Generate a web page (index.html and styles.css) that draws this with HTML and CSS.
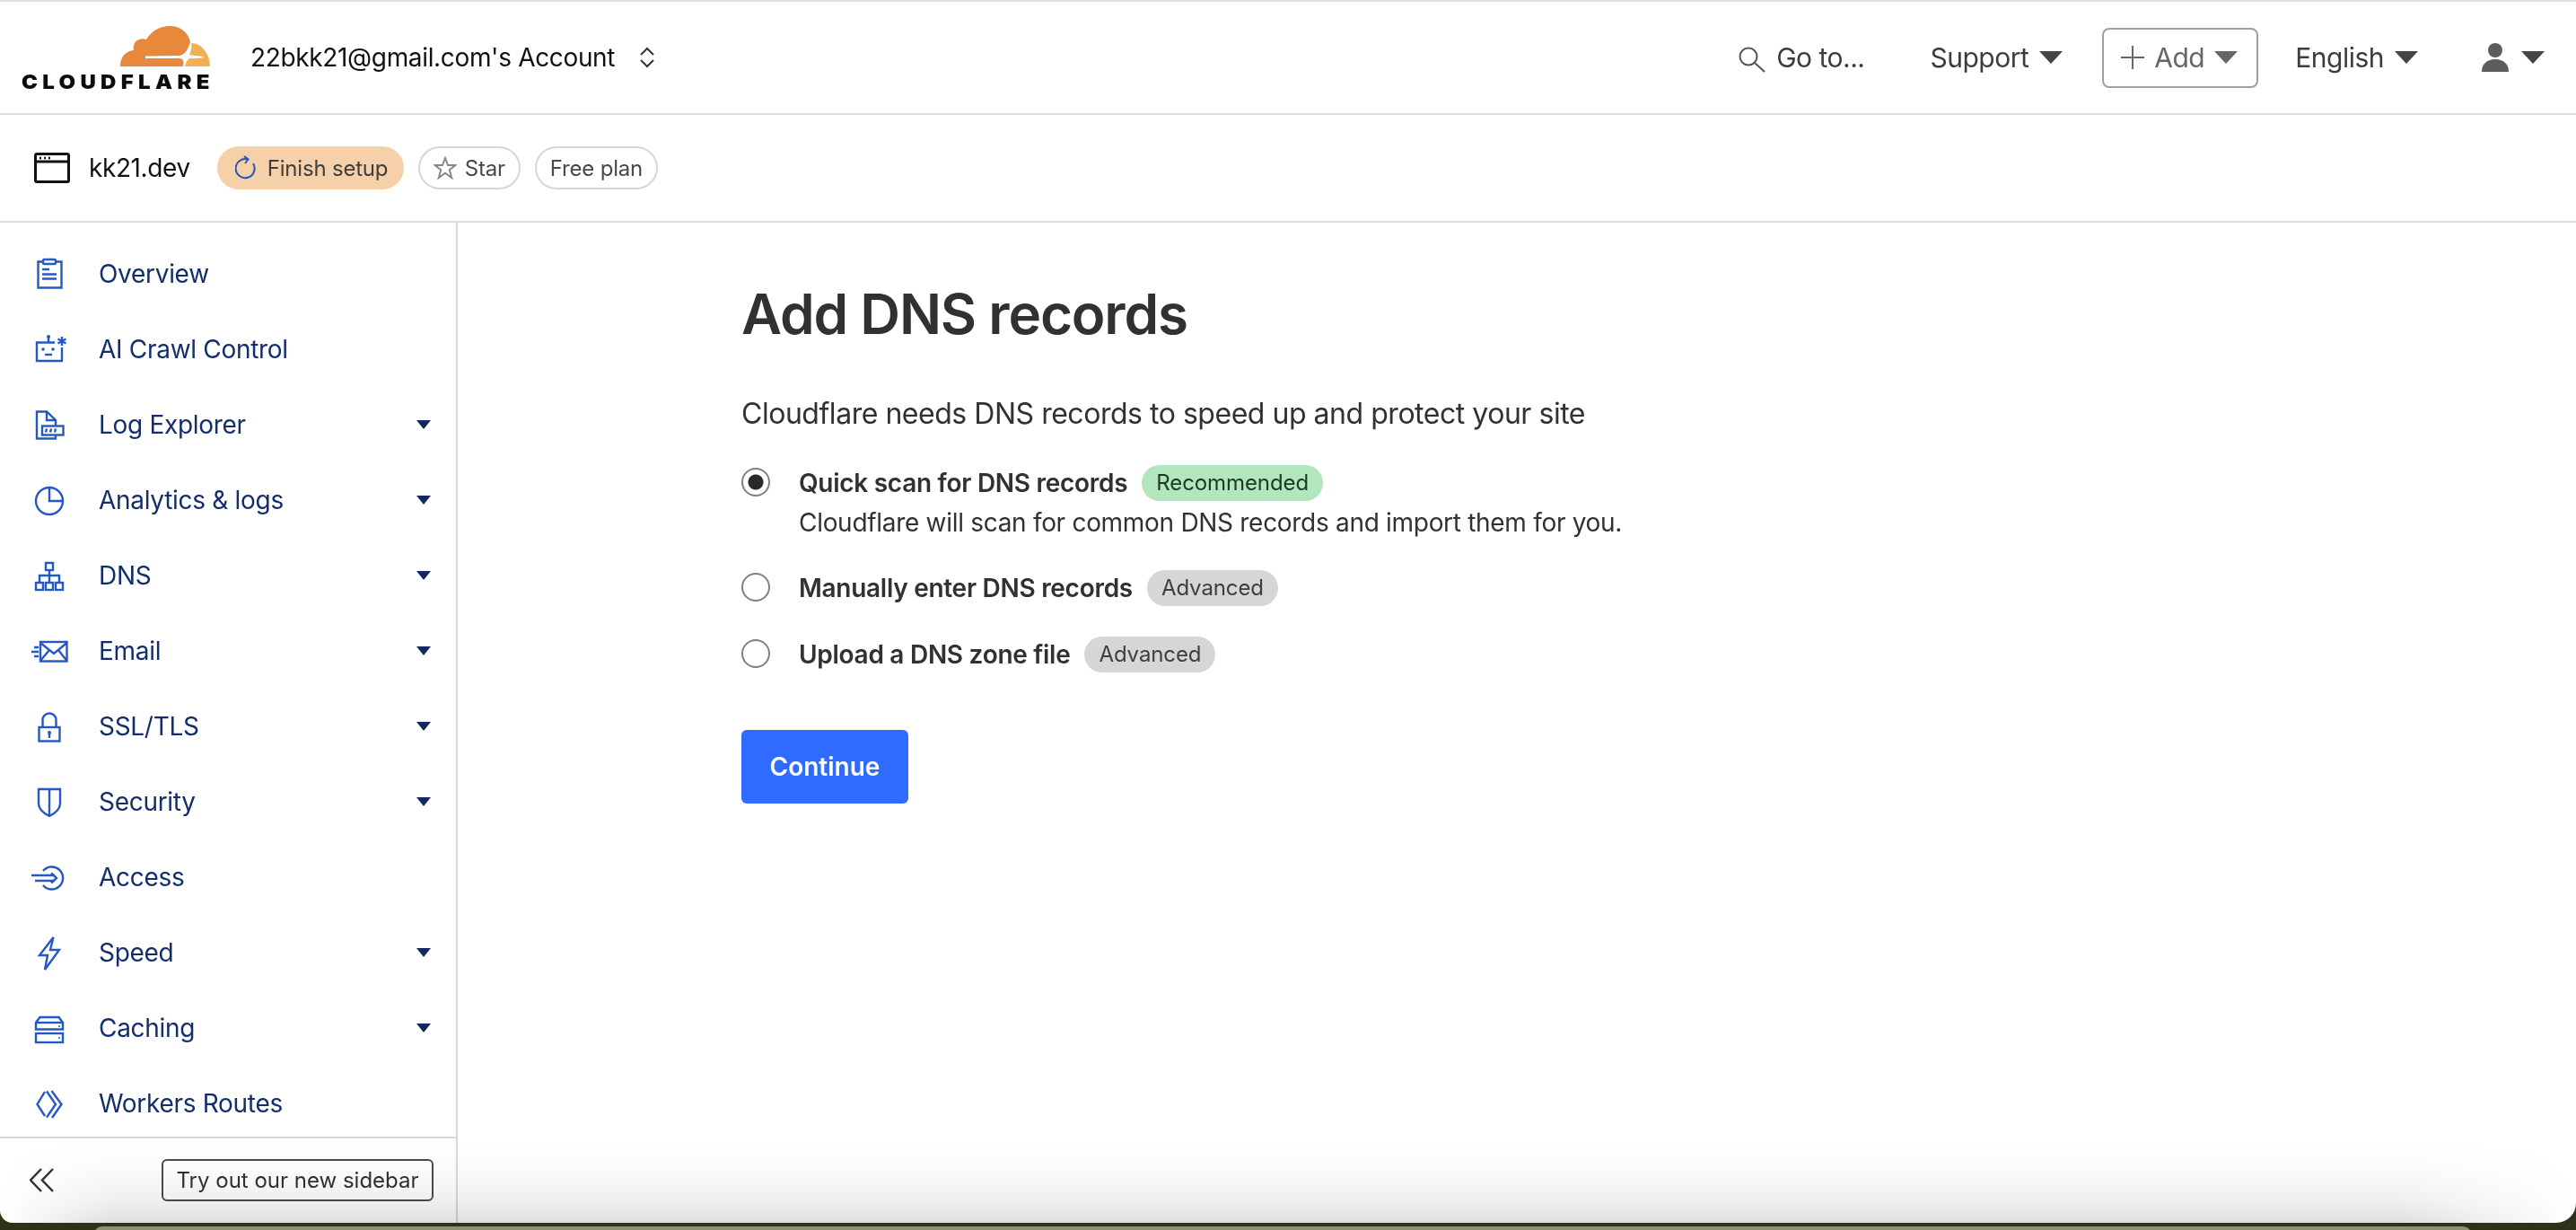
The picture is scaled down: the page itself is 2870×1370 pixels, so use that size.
FILE: index.html
```html
<!DOCTYPE html>
<html lang="en">
<head>
<meta charset="utf-8">
<title>Add DNS records</title>
<link rel="stylesheet" href="styles.css">
</head>
<body>
<div class="backdrop-bar"></div>
<div class="window">
  <header class="topbar">
    <a class="logo">
      <svg class="cloud" viewBox="0 0 100 45">
        <path fill="#e8883a" d="M0 45C0 34 6 28 15 27C13 18 21 12 29 15C35 5 45 0 55 0C67 0 76 7 78 18C76 24 73 32 66 33L28 33.5V36H66C71 36 71 41 70 45Z"/>
        <path fill="#f0b058" d="M79 19C90 19 100 30 100 45H72C73 41 74 38 77 36C84 36 93 36 93 34.5C88 33 80 33 77 32C79 28 80 23 79 19Z"/>
      </svg>
      <span class="wordmark">CLOUDFLARE</span>
    </a>
    <div class="account">
      <span>22bkk21@gmail.com's Account</span>
      <svg class="updown" viewBox="0 0 18 24"><path d="M2 9L9 2L16 9M2 15L9 22L16 15"/></svg>
    </div>
    <nav class="topnav">
      <div class="tn goto">
        <svg class="search" viewBox="0 0 32 28"><circle cx="12" cy="11" r="9.5"/><path d="M19 18L30 28"/></svg>
        <span>Go to...</span>
      </div>
      <div class="tn support"><span>Support</span><i class="caret"></i></div>
      <div class="tn add">
        <svg class="plus" viewBox="0 0 26 26"><path d="M13 0V26M0 13H26"/></svg>
        <span>Add</span><i class="caret caret-soft"></i>
      </div>
      <div class="tn lang"><span>English</span><i class="caret"></i></div>
      <div class="tn user">
        <svg class="usericon" viewBox="0 0 32 32"><circle cx="16" cy="8" r="8"/><path d="M1 32C1 23 7 18 16 18S31 23 31 32Z"/></svg>
        <i class="caret"></i>
      </div>
    </nav>
  </header>

  <div class="subbar">
    <svg class="siteicon" viewBox="0 0 40 34"><rect x="1.5" y="1.5" width="37" height="31" rx="1.5"/><path d="M1.5 10H38.5"/><path class="dots" d="M6 6H8M11 6H13M16 6H18"/></svg>
    <span class="sitename">kk21.dev</span>
    <span class="pill pill-setup">
      <svg class="refresh" viewBox="0 0 24 28"><path d="M14 4.500A10.500 10.500 0 1 0 20 9"/><path d="M10 1L14.500 4.500L11 9"/></svg>
      Finish setup
    </span>
    <span class="pill pill-line">
      <svg class="star" viewBox="0 0 26 26"><path d="M13 2L16 10H24.500L17.800 15.200L20.200 24L13 18.800L5.800 24L8.200 15.200L1.500 10H10Z"/></svg>
      Star
    </span>
    <span class="pill pill-line">Free plan</span>
  </div>

  <div class="body">
    <aside class="sidebar">
      <ul class="menu">
        <li class="mi">
          <svg class="ic" viewBox="0 0 48 40"><path d="M17 6.500H11.500V35.500H37.500V6.500H31"/><rect x="17" y="4" width="14" height="5" rx="1.500"/><path d="M16 15H24M16 20.500H32M16 25.500H32"/></svg>
          <span class="ml">Overview</span>
        </li>
        <li class="mi">
          <svg class="ic" viewBox="0 0 48 40"><path d="M30 12.500H10V33H38V18"/><path d="M23 6V12"/><circle class="solid" cx="23" cy="6" r="2"/><circle class="solid" cx="17" cy="20" r="1.800"/><circle class="solid" cx="28" cy="20" r="1.800"/><path d="M19 26H27"/><path d="M38 6V16M33.500 8.500L42.500 13.500M42.500 8.500L33.500 13.500"/></svg>
          <span class="ml">AI Crawl Control</span>
        </li>
        <li class="mi">
          <svg class="ic" viewBox="0 0 48 40"><path d="M31 21V15L21 5.500H10V35.500H31V32"/><path d="M21 5.500V15H31"/><rect x="16" y="21.500" width="23.500" height="10"/><path d="M21 24.500L20 28.500M26 24.500L25 28.500M31 24.500L30 28.500"/></svg>
          <span class="ml">Log Explorer</span><i class="mc"></i>
        </li>
        <li class="mi">
          <svg class="ic" viewBox="0 0 48 40"><path d="M24 6A15 15 0 1 0 39 21A15 15 0 0 0 24 6V21H39"/></svg>
          <span class="ml">Analytics &amp; logs</span><i class="mc"></i>
        </li>
        <li class="mi">
          <svg class="ic" viewBox="0 0 48 40"><rect x="20" y="6" width="8" height="8"/><path d="M24 14V28M13 28V20H35V28"/><rect x="9" y="28" width="8" height="8"/><rect x="20" y="28" width="8" height="8"/><rect x="31" y="28" width="8" height="8"/></svg>
          <span class="ml">DNS</span><i class="mc"></i>
        </li>
        <li class="mi">
          <svg class="ic" viewBox="0 0 48 40"><rect x="14" y="10" width="29.500" height="21.500"/><path d="M14 11L29 23L43.500 11M14 31L24 19M43.500 31L34 19"/><path d="M7 16H12M4 21H12M7 26H12"/></svg>
          <span class="ml">Email</span><i class="mc"></i>
        </li>
        <li class="mi">
          <svg class="ic" viewBox="0 0 48 40"><rect x="12.500" y="21" width="23" height="15.500"/><path d="M16.500 21V13A7.500 7.500 0 0 1 31.500 13V21"/><circle class="solid" cx="24" cy="27" r="2"/><path d="M24 28V33"/></svg>
          <span class="ml">SSL/TLS</span><i class="mc"></i>
        </li>
        <li class="mi">
          <svg class="ic" viewBox="0 0 48 40"><path d="M12 6H36V22C36 29 30 33 24 36C18 33 12 29 12 22Z"/><path d="M24 6V35"/></svg>
          <span class="ml">Security</span><i class="mc"></i>
        </li>
        <li class="mi">
          <svg class="ic" viewBox="0 0 48 40"><path d="M17 13A12.500 12.500 0 1 1 17 29"/><path d="M4 18H30M8 24H30M26 15.500L32 21L26 26.500"/></svg>
          <span class="ml">Access</span>
        </li>
        <li class="mi">
          <svg class="ic" viewBox="0 0 48 40"><path d="M28.500 3L13 23H22L19 39L35 17H25Z"/></svg>
          <span class="ml">Speed</span><i class="mc"></i>
        </li>
        <li class="mi">
          <svg class="ic" viewBox="0 0 48 40"><path d="M9 21.500V14L13.500 8H34.500L39 14V21.500Z"/><path d="M9 14H39"/><rect x="9" y="26" width="30" height="10"/><circle class="solid" cx="35" cy="18" r="1"/><circle class="solid" cx="35" cy="31" r="1"/></svg>
          <span class="ml">Caching</span><i class="mc"></i>
        </li>
        <li class="mi">
          <svg class="ic" viewBox="0 0 48 40"><path d="M19 7L10.500 21L19 34M21 6.500L31 21L21 35.500M26.500 6L37.500 21L27 36"/></svg>
          <span class="ml">Workers Routes</span>
        </li>
      </ul>
      <div class="sidefoot">
        <svg class="collapse" viewBox="0 0 27 27"><path d="M13 1L1 13.500L13 26M26 1L14 13.500L26 26"/></svg>
        <button class="trybtn">Try out our new sidebar</button>
      </div>
    </aside>

    <main class="content">
      <h1>Add DNS records</h1>
      <p class="lead">Cloudflare needs DNS records to speed up and protect your site</p>
      <div class="opt opt-first">
        <span class="radio radio-on"></span>
        <strong>Quick scan for DNS records</strong>
        <span class="tag tag-green">Recommended</span>
      </div>
      <p class="optdesc">Cloudflare will scan for common DNS records and import them for you.</p>
      <div class="opt opt-second">
        <span class="radio"></span>
        <strong>Manually enter DNS records</strong>
        <span class="tag">Advanced</span>
      </div>
      <div class="opt opt-third">
        <span class="radio"></span>
        <strong>Upload a DNS zone file</strong>
        <span class="tag">Advanced</span>
      </div>
      <button class="continue">Continue</button>
    </main>
  </div>
  <div class="edge-shadow"></div>
</div>
</body>
</html>
```

FILE: styles.css
```css
* { box-sizing: border-box; }
html, body { margin: 0; height: 100%; }
body {
  width: 2870px;
  height: 1370px;
  overflow: hidden;
  position: relative;
  background: #2e3219;
  font-family: Inter, "Liberation Sans", sans-serif;
  color: #313131;
}
.backdrop-bar {
  position: absolute;
  left: 104px;
  right: 116px;
  top: 1366px;
  height: 10px;
  background: #8b9174;
  border-radius: 12px 12px 0 0;
}
.window {
  position: relative;
  height: 1362px;
  background: #fff;
  border-radius: 0 0 22px 14px;
  overflow: hidden;
  display: flex;
  flex-direction: column;
}
.topbar {
  height: 128px;
  flex: none;
  border-top: 2px solid #e0e0e0;
  border-bottom: 2px solid #dcdcdc;
  display: flex;
  align-items: center;
  padding: 0 35px 0 24px;
}
.logo {
  width: 210px;
  height: 72px;
  display: flex;
  flex-direction: column;
  align-items: flex-end;
  margin-top: 2px;
}
.cloud { width: 100px; height: 45px; display: block; }
.wordmark {
  display: block;
  width: 210px;
  font-weight: 900;
  font-size: 22px;
  line-height: 18px;
  letter-spacing: 4.9px;
  color: #0c0c0c;
  margin-top: 8px;
  white-space: nowrap;
  transform: scaleX(1.09);
  transform-origin: left center;
}
.account {
  margin-left: 45px;
  display: flex;
  align-items: center;
  gap: 27px;
  font-size: 28px;
  letter-spacing: -0.34px;
  color: #111;
}
.updown { width: 18px; height: 24px; fill: none; stroke: #333; stroke-width: 2; }
.topnav { margin-left: auto; display: flex; align-items: center; font-size: 30px; letter-spacing: -0.5px; color: #3c3c3c; }
.tn { display: flex; align-items: center; }
.goto { gap: 11px; }
.support { margin-left: 73px; gap: 12px; }
.add {
  margin-left: 44px;
  width: 174px;
  height: 67px;
  border: 2px solid #a0a0a0;
  border-radius: 8px;
  padding-left: 19px;
  gap: 11px;
  color: #666;
}
.lang { margin-left: 41px; gap: 12px; }
.user { margin-left: 70px; gap: 13px; }
.search { width: 32px; height: 28px; fill: none; stroke: #555; stroke-width: 2; margin-top: 4px; overflow: visible; }
.plus { width: 26px; height: 26px; fill: none; stroke: #666; stroke-width: 2; }
.usericon { width: 32px; height: 32px; fill: #5c5c5c; }
.caret {
  width: 0;
  height: 0;
  border-left: 13px solid transparent;
  border-right: 13px solid transparent;
  border-top: 14px solid #454545;
}
.caret-soft { border-top-color: #666; }

.subbar {
  height: 120px;
  flex: none;
  border-bottom: 2px solid #dcdcdc;
  display: flex;
  align-items: center;
  padding-left: 38px;
}
.siteicon { width: 40px; height: 34px; fill: none; stroke: #111; stroke-width: 3; }
.siteicon .dots { stroke-width: 2.5; }
.sitename { margin-left: 21px; font-size: 28px; letter-spacing: -0.4px; color: #111; }
.pill {
  height: 48px;
  border-radius: 24px;
  display: flex;
  align-items: center;
  font-size: 24px;
  letter-spacing: -0.2px;
  color: #3e3e3e;
  white-space: nowrap;
}
.pill-setup { margin-left: 30px; width: 208px; padding-left: 20px; gap: 12px; background: #f5d0a9; }
.pill-line { margin-left: 16px; padding: 0 15px; gap: 9px; background: #fff; border: 2px solid #d6d6d6; color: #484848; }
.refresh { width: 24px; height: 28px; fill: none; stroke: #2255b8; stroke-width: 2; }
.star { width: 26px; height: 26px; fill: none; stroke: #888; stroke-width: 2; }

.body { flex: 1; min-height: 0; display: flex; }
.sidebar {
  width: 510px;
  flex: none;
  border-right: 2px solid #d8d8d8;
  display: flex;
  flex-direction: column;
}
.menu {
  list-style: none;
  margin: 0;
  padding: 15px 0 0 31px;
  flex: 1;
  min-height: 0;
  overflow: hidden;
}
.mi {
  height: 84px;
  display: flex;
  align-items: center;
  font-size: 28px;
  letter-spacing: -0.3px;
  color: #142e6c;
  padding-right: 28px;
}
.ml { margin-left: 31px; }
.ic {
  width: 48px;
  height: 40px;
  flex: none;
  overflow: visible;
  fill: none;
  stroke: #2458c6;
  stroke-width: 2.4;
}
.ic .solid { fill: #2458c6; stroke: none; }
.mc {
  margin-left: auto;
  width: 0;
  height: 0;
  border-left: 8px solid transparent;
  border-right: 8px solid transparent;
  border-top: 10px solid #14275e;
}
.sidefoot {
  height: 96px;
  flex: none;
  border-top: 2px solid #d8d8d8;
  display: flex;
  align-items: center;
  justify-content: space-between;
  padding: 0 25px 2px 33px;
}
.collapse { width: 27px; height: 27px; fill: none; stroke: #333; stroke-width: 2.5; }
.trybtn {
  width: 303px;
  height: 47px;
  background: transparent;
  border: 2px solid #4a4a4a;
  border-radius: 6px;
  font: 24px Inter, "Liberation Sans", sans-serif;
  color: #313131;
  padding: 0;
}

.content { flex: 1; padding: 66px 0 0 316px; }
h1 {
  margin: 0;
  font-size: 62px;
  line-height: 72px;
  font-weight: 600;
  letter-spacing: -1.2px;
  color: #313131;
}
.lead { margin: 53px 0 0; font-size: 32px; line-height: 44px; letter-spacing: -0.47px; }
.opt { display: flex; align-items: center; height: 40px; font-size: 28px; letter-spacing: -0.28px; }
.opt strong { font-weight: 600; margin-left: 32px; }
.opt-first { margin-top: 35px; }
.opt-second { margin-top: 33px; }
.opt-third { margin-top: 34px; }
.radio {
  width: 32px;
  height: 32px;
  flex: none;
  margin-top: -3px;
  border: 2px solid #808080;
  border-radius: 50%;
  background: #fff;
}
.radio-on {
  background: radial-gradient(circle, #2a2a2a 0 8px, #fff 9px);
}
.tag {
  margin-left: 16px;
  height: 40px;
  padding: 0 16px;
  border-radius: 20px;
  background: #d6d6d6;
  color: #3e3e3e;
  font-size: 24px;
  letter-spacing: -0.1px;
  line-height: 40px;
}
.tag-green { background: #b2e6bd; color: #1c3a22; }
.optdesc { margin: 4px 0 0 64px; font-size: 28px; line-height: 40px; letter-spacing: -0.3px; }
.continue {
  margin-top: 64px;
  width: 186px;
  height: 82px;
  display: block;
  background: #2f6bff;
  border: 0;
  border-radius: 6px;
  color: #fff;
  font: 600 28px Inter, "Liberation Sans", sans-serif;
}
.edge-shadow {
  position: absolute;
  left: 0;
  right: 0;
  bottom: 0;
  height: 90px;
  pointer-events: none;
  mix-blend-mode: multiply;
  background: linear-gradient(#fff, #f9f9f9 40%, #eeeeee 75%, #dedede);
  -webkit-mask-image: linear-gradient(90deg, transparent, #000 130px, #000 calc(100% - 200px), transparent);
  mask-image: linear-gradient(90deg, transparent, #000 130px, #000 calc(100% - 200px), transparent);
}
```
